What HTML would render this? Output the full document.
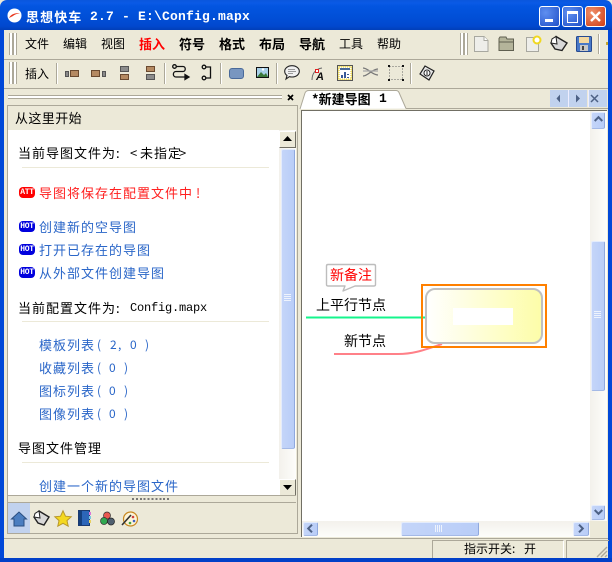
<!DOCTYPE html>
<html><head><meta charset="utf-8"><style>
html,body{margin:0;padding:0;background:#ece9d8}
#w{position:relative;width:612px;height:562px;overflow:hidden;background:#ece9d8;font-family:"WenQuanYi Zen Hei","Noto Sans CJK SC","Liberation Sans",sans-serif;font-size:12px;color:#000}
.a{position:absolute}
.t{position:absolute;white-space:nowrap;line-height:16px}
.m{font-family:"Liberation Mono","WenQuanYi Zen Hei",monospace}
.b{font-weight:bold}
.mb{font-weight:bold;font-size:13px}
.c{font-size:13px;letter-spacing:1px}
.l{color:#2a66c8}
.hr{position:absolute;left:22px;width:247px;height:1px;background:#ece9d8}
.grip{position:absolute;width:2px;border-left:1px solid #aca899;border-right:1px solid #aca899;background:#fff}
.sep{position:absolute;width:1px;background:#aca899;border-right:1px solid #fff}
.badge{position:absolute;left:19px;width:16px;height:11px;border-radius:4px;color:#fff;font:bold 8px/11px "Liberation Mono",monospace;text-align:center;background:#00d;letter-spacing:-.3px}
svg{position:absolute;overflow:visible}
.sb{position:absolute;background:linear-gradient(90deg,#c4d5f9,#b9cdf7);border:1px solid #e4ecfc;border-right-color:#8fa8de;border-bottom-color:#a4b9e6;border-radius:2px}
</style></head><body><div id="w">
<!-- title bar -->
<div class="a" style="left:0;top:0;width:612px;height:30px;background:linear-gradient(#0a56dc 0,#0a5ae6 3px,#0355e0 6px,#0150d8 16px,#0148cf 26px,#013fb8 30px);border-radius:7px 7px 0 0"></div>
<div class="a" style="left:0;top:30px;width:4px;height:532px;background:#0148d8"></div>
<div class="a" style="left:608px;top:30px;width:4px;height:532px;background:#0148d8"></div>
<div class="a" style="left:0;top:558px;width:612px;height:4px;background:#0140c8"></div>
<svg style="left:7px;top:8px" width="15" height="15"><circle cx="7.5" cy="7.500" r="7" fill="#fff"/><path d="M2 10 C4 6 8 5 13 5 C9 6 7 7 6 8 Z" fill="#e8361c"/></svg>
<div class="t b" style="left:26px;top:9px;color:#fff;font-size:13px;letter-spacing:1.100px">思想快车</div>
<div class="t b m" style="left:90px;top:9px;color:#fff;font-size:13px;letter-spacing:.2px">2.7 - E:\Config.mapx</div>
<!-- window buttons -->
<div class="a" style="left:539px;top:6px;width:19px;height:19px;border:1px solid #fff;border-radius:3px;background:radial-gradient(circle at 30% 30%,#5f8ff0,#2050c8)"></div>
<div class="a" style="left:545px;top:19px;width:8px;height:3px;background:#fff"></div>
<div class="a" style="left:562px;top:6px;width:19px;height:19px;border:1px solid #fff;border-radius:3px;background:radial-gradient(circle at 30% 30%,#5f8ff0,#2050c8)"></div>
<div class="a" style="left:567px;top:11px;width:9px;height:8px;border:1px solid #fff;border-top:3px solid #fff"></div>
<div class="a" style="left:585px;top:6px;width:19px;height:19px;border:1px solid #fff;border-radius:3px;background:radial-gradient(circle at 30% 30%,#f0906a,#d03c14)"></div>
<svg style="left:590px;top:11px" width="11" height="11"><path d="M1 1L10 10M10 1L1 10" stroke="#fff" stroke-width="2.400"/></svg>
<!-- toolbars -->
<div class="a" style="left:4px;top:59px;width:604px;height:1px;background:#aca899"></div>
<div class="a" style="left:4px;top:88px;width:604px;height:1px;background:#aca899"></div>
<div class="grip" style="left:9px;top:33px;height:22px"></div>
<div class="grip" style="left:13px;top:33px;height:22px"></div>
<div class="grip" style="left:9px;top:62px;height:22px"></div>
<div class="grip" style="left:13px;top:62px;height:22px"></div>
<div class="t" style="left:25px;top:36px">文件</div>
<div class="t" style="left:63px;top:36px">编辑</div>
<div class="t" style="left:101px;top:36px">视图</div>
<div class="t mb" style="left:139px;top:36px;color:#f00">插入</div>
<div class="t mb" style="left:179px;top:36px">符号</div>
<div class="t mb" style="left:219px;top:36px">格式</div>
<div class="t mb" style="left:259px;top:36px">布局</div>
<div class="t mb" style="left:299px;top:36px">导航</div>
<div class="t" style="left:339px;top:36px">工具</div>
<div class="t" style="left:377px;top:36px">帮助</div>
<div class="grip" style="left:460px;top:33px;height:22px"></div>
<div class="grip" style="left:464px;top:33px;height:22px"></div>
<!-- top-right icons -->
<svg style="left:473px;top:35px" width="18" height="18"><path d="M1.500 1.500H11L15 5.500V16.500H1.500Z" fill="#eeeeea" stroke="#a8a8a0"/><path d="M11 1.500V5.500H15" fill="#fff" stroke="#a8a8a0"/></svg>
<svg style="left:498px;top:36px" width="18" height="16"><path d="M1 14.500V2.500L2 1H8L9 3H15.500V14.500Z" fill="#b4b49a" stroke="#5f5f50"/><path d="M1 6H15.500" stroke="#5f5f50"/></svg>
<svg style="left:525px;top:35px" width="18" height="18"><rect x="1.500" y="2.500" width="12" height="14" fill="#eeeeea" stroke="#a8a8a0"/><circle cx="12" cy="5" r="3.500" fill="#fff" stroke="#f0d820" stroke-width="2"/></svg>
<svg style="left:549px;top:35px" width="20" height="18"><path d="M7 1.500L18 8L13 15.500L6 14L2 8Z" fill="#d8d8d8" stroke="#222" stroke-width="1.400"/><path d="M2 8L3 4L7 1.500L8 9Z" fill="#fff" stroke="#222"/></svg>
<svg style="left:576px;top:36px" width="16" height="16"><rect x=".5" y=".5" width="15" height="15" rx="1" fill="#4878c8" stroke="#264a90"/><rect x="3" y="1" width="10" height="6" fill="#f4d8a0"/><rect x="4" y="9" width="8" height="6" fill="#c8c8c8"/><rect x="6" y="10" width="2" height="4" fill="#444"/></svg>
<div class="sep" style="left:598px;top:34px;height:20px"></div>
<div class="a" style="left:606px;top:42px;width:2px;height:3px;background:#c8a830"></div>
<!-- toolbar 2 -->
<div class="t" style="left:25px;top:66px">插入</div>
<div class="sep" style="left:56px;top:63px;height:21px"></div>
<svg style="left:65px;top:70px" width="42" height="8">
<rect x=".5" y="1.500" width="3" height="5" fill="#8a8a8a" stroke="#555"/><rect x="5.500" y=".5" width="8" height="6" fill="#b58a62" stroke="#6a4a30"/>
<rect x="26.500" y=".5" width="8" height="6" fill="#b58a62" stroke="#6a4a30"/><rect x="37.500" y="1.500" width="3" height="5" fill="#8a8a8a" stroke="#555"/>
</svg>
<svg style="left:120px;top:66px" width="36" height="15">
<rect x=".5" y=".5" width="8" height="5" fill="#8c8c8c" stroke="#555"/><rect x=".5" y="8.500" width="8" height="5" fill="#b58a62" stroke="#6a4a30"/>
<rect x="26.500" y=".5" width="8" height="5" fill="#b58a62" stroke="#6a4a30"/><rect x="26.500" y="8.500" width="8" height="5" fill="#8c8c8c" stroke="#555"/>
</svg>
<div class="sep" style="left:164px;top:63px;height:21px"></div>
<svg style="left:171px;top:64px" width="20" height="18" fill="none" stroke="#111" stroke-width="1.300"><circle cx="3.500" cy="2.500" r="1.800"/><path d="M5 2.500H12C15 2.500 15 7.500 12 7.500H5C1.500 7.500 1.500 13 5 13H14"/><path d="M14 10.500L18 13L14 15.500Z" fill="#111"/></svg>
<svg style="left:201px;top:64px" width="12" height="18" fill="none" stroke="#111" stroke-width="1.300"><circle cx="3" cy="3" r="1.800"/><circle cx="3" cy="14" r="1.800"/><path d="M5 3H9.500V14H5"/></svg>
<div class="sep" style="left:220px;top:63px;height:21px"></div>
<div class="a" style="left:229px;top:68px;width:13px;height:9px;background:#7896c0;border:1px solid #4a6a9a;border-radius:3px"></div>
<svg style="left:256px;top:67px" width="14" height="12"><rect x=".5" y=".5" width="12" height="10" fill="#a8d0e8" stroke="#111"/><path d="M1 10L5 5L8 8L10 6L12 10Z" fill="#3c7a3c"/><circle cx="7" cy="2.500" r="1.200" fill="#fff"/></svg>
<div class="sep" style="left:276px;top:63px;height:21px"></div>
<svg style="left:284px;top:65px" width="16" height="15"><path d="M8 .7C12 .7 15.300 3 15.300 6.300S12 12 8 12C7 12 6 11.800 5.500 11.600L2 14L3 10.500C1.500 9.500 .7 8 .7 6.300C.7 3 4 .7 8 .7Z" fill="#f0f0f0" stroke="#222" stroke-width="1.100"/><path d="M4 4.500H11M4 6.500H12M4 8.500H9" stroke="#999"/></svg>
<svg style="left:311px;top:66px" width="16" height="15"><path d="M1 14C1 8 4 3 11 2" fill="none" stroke="#666"/><rect x="4.500" y="3.500" width="3" height="3" fill="#fff" stroke="#e02020"/><text x="5" y="14" font-family="Liberation Sans" font-style="italic" font-weight="bold" font-size="11" fill="#111">A</text></svg>
<svg style="left:337px;top:65px" width="16" height="16"><rect x=".5" y=".5" width="15" height="15" fill="#f4eca0" stroke="#555"/><rect x="2" y="2" width="12" height="12" fill="#fff" stroke="#e8c820" stroke-dasharray="1 1"/><rect x="3" y="3" width="10" height="2" fill="#4a6a98"/><path d="M4 13V10H6V13ZM7 13V7H9V13ZM10 9H12V10H10ZM10 12H12V13H10Z" fill="#3a5a98"/></svg>
<svg style="left:362px;top:66px" width="17" height="13" fill="none" stroke="#777" stroke-width="1.300"><path d="M1 2C6 2 10 9 16 9M1 10C6 10 10 3 16 3"/><path d="M1 5H16" stroke="#aaa"/></svg>
<svg style="left:388px;top:65px" width="16" height="16"><rect x="1.500" y="1.500" width="13" height="13" fill="none" stroke="#666" stroke-dasharray="1 2"/><path d="M0 0h2v2H0zM14 0h2v2h-2zM0 14h2v2H0zM14 14h2v2h-2z" fill="#111"/></svg>
<div class="sep" style="left:410px;top:63px;height:21px"></div>
<svg style="left:419px;top:65px" width="16" height="16"><path d="M6 1L15 6L10 15L1 9Z" fill="#e8e8e8" stroke="#222" stroke-width="1.200"/><circle cx="8" cy="8" r="3" fill="#fff" stroke="#222"/><path d="M8 6V10" stroke="#222"/></svg>
<!-- left dock header -->
<div class="a" style="left:8px;top:95px;width:274px;height:2px;border-top:1px solid #aca899;border-bottom:1px solid #aca899;background:#fff"></div>
<svg style="left:287px;top:94px" width="7" height="7"><path d="M1 1L6 6M6 1L1 6" stroke="#000" stroke-width="1.700"/></svg>
<!-- left panel -->
<div class="a" style="left:7px;top:105px;width:289px;height:427px;border:1px solid #aca899;background:#ece9d8"></div>
<div class="t" style="left:15px;top:110px;font-size:13px;letter-spacing:.4px">从这里开始</div>
<div class="a" style="left:8px;top:130px;width:271px;height:365px;background:#fff"></div>
<div class="t c" style="left:18px;top:145px">当前导图文件为</div>
<div class="t c" style="left:116px;top:145px">:</div>
<div class="t c" style="left:130px;top:145px">&lt;</div>
<div class="t c" style="left:140px;top:145px">未指定</div>
<div class="t c" style="left:179px;top:145px">&gt;</div>
<div class="hr" style="top:167px"></div>
<div class="badge" style="top:187px;background:#f00">ATT</div>
<div class="t c" style="left:39px;top:185px;color:#ff2020">导图将保存在配置文件中</div>
<div class="t c" style="left:196px;top:185px;color:#ff2020">!</div>
<div class="badge" style="top:221px">HOT</div>
<div class="t c l" style="left:39px;top:219px">创建新的空导图</div>
<div class="badge" style="top:244px">HOT</div>
<div class="t c l" style="left:39px;top:242px">打开已存在的导图</div>
<div class="badge" style="top:267px">HOT</div>
<div class="t c l" style="left:39px;top:265px">从外部文件创建导图</div>
<div class="t c" style="left:18px;top:300px">当前配置文件为</div>
<div class="t c" style="left:116px;top:300px">:</div>
<div class="t m" style="left:130px;top:300px;letter-spacing:-.2px">Config.mapx</div>
<div class="hr" style="top:321px"></div>
<div class="t c l" style="left:39px;top:337px">模板列表</div>
<div class="t l" style="left:97px;top:337px">(</div>
<div class="t l" style="left:110px;top:337px">2</div>
<div class="t l" style="left:118px;top:337px">,</div>
<div class="t l" style="left:130px;top:337px">0</div>
<div class="t l" style="left:145px;top:337px">)</div>
<div class="t c l" style="left:39px;top:360px">收藏列表</div>
<div class="t l" style="left:97px;top:360px">(</div>
<div class="t l" style="left:109px;top:360px">0</div>
<div class="t l" style="left:124px;top:360px">)</div>
<div class="t c l" style="left:39px;top:383px">图标列表</div>
<div class="t l" style="left:97px;top:383px">(</div>
<div class="t l" style="left:109px;top:383px">0</div>
<div class="t l" style="left:124px;top:383px">)</div>
<div class="t c l" style="left:39px;top:406px">图像列表</div>
<div class="t l" style="left:97px;top:406px">(</div>
<div class="t l" style="left:109px;top:406px">0</div>
<div class="t l" style="left:124px;top:406px">)</div>
<div class="t c" style="left:18px;top:440px">导图文件管理</div>
<div class="hr" style="top:462px"></div>
<div class="t c l" style="left:39px;top:478px">创建一个新的导图文件</div>
<!-- left scrollbar -->
<div class="a" style="left:279px;top:130px;width:17px;height:365px;background:linear-gradient(90deg,#f3f1ec,#fdfdfa)"></div>
<div class="a" style="left:279px;top:131px;width:15px;height:15px;background:#ece9d8;border:1px solid;border-color:#fff #716f64 #716f64 #fff"></div>
<svg style="left:283px;top:136px" width="9" height="5"><path d="M0 5H9L4.500 0Z" fill="#000"/></svg>
<div class="sb" style="left:281px;top:149px;width:12px;height:298px"></div>
<div class="a" style="left:284px;top:294px;width:7px;height:7px;background:repeating-linear-gradient(#eef3fd 0 1px,transparent 1px 2px)"></div>
<div class="a" style="left:279px;top:479px;width:15px;height:15px;background:#ece9d8;border:1px solid;border-color:#fff #716f64 #716f64 #fff"></div>
<svg style="left:283px;top:485px" width="9" height="5"><path d="M0 0H9L4.500 5Z" fill="#000"/></svg>
<!-- splitter -->
<div class="a" style="left:8px;top:495px;width:288px;height:1px;background:#aca899"></div>
<div class="a" style="left:132px;top:498px;width:39px;height:2px;background:repeating-linear-gradient(90deg,#777 0 2px,transparent 2px 3.900px)"></div>
<div class="a" style="left:8px;top:502px;width:288px;height:1px;background:#aca899"></div>
<!-- bottom icons -->
<div class="a" style="left:8px;top:503px;width:22px;height:30px;background:#c1d2ee"></div>
<svg style="left:11px;top:511px" width="16" height="16"><path d="M.5 8L8 1L15.500 8H13V15H3V8Z" fill="#4b7ec0" stroke="#2a4e80"/></svg>
<svg style="left:33px;top:510px" width="17" height="16"><path d="M6 1L16 7L11 15L5 13L1 7Z" fill="#d8d8d8" stroke="#222" stroke-width="1.400"/><path d="M1 7L2 3.500L6 1L7 8Z" fill="#fff" stroke="#222"/></svg>
<svg style="left:54px;top:510px" width="18" height="17"><path d="M9 .8L11.500 6.200L17.200 6.800L13 10.600L14.200 16.200L9 13.300L3.800 16.200L5 10.600L.8 6.800L6.500 6.200Z" fill="#f4d820" stroke="#b8982a"/></svg>
<svg style="left:78px;top:510px" width="14" height="17"><rect x=".5" y=".5" width="11" height="15" fill="#2c66b8" stroke="#1a3a70"/><rect x="1" y="1" width="3" height="14" fill="#14407e"/><rect x="11" y="2" width="2" height="3" fill="#d878d8"/><rect x="11" y="6" width="2" height="3" fill="#78c8e0"/><rect x="11" y="10" width="2" height="3" fill="#e8d060"/></svg>
<svg style="left:100px;top:511px" width="15" height="15"><circle cx="7" cy="4.500" r="3.500" fill="#e85850" stroke="#333" stroke-width=".7"/><circle cx="4" cy="10" r="3.500" fill="#30a850" stroke="#333" stroke-width=".7"/><circle cx="11" cy="10.500" r="3.500" fill="#506070" stroke="#222" stroke-width=".7"/></svg>
<svg style="left:121px;top:510px" width="17" height="17"><ellipse cx="9.500" cy="9" rx="7" ry="7" fill="#fcf4d8" stroke="#c88820" stroke-width="1.200"/><circle cx="12" cy="7" r="1.300" fill="#d04040"/><circle cx="13" cy="11" r="1.300" fill="#4060c0"/><circle cx="9" cy="13" r="1.300" fill="#40a040"/><path d="M1 15L10 5" stroke="#333" stroke-width="1.600"/></svg>
<!-- tab -->
<svg style="left:300px;top:89px" width="108" height="21"><path d="M0 20L5 4Q6 1.500 9 1.500H96Q98 1.500 99 3.500L106 19.500" fill="#fff" stroke="#aca899"/></svg>
<div class="t b" style="left:312px;top:91px;font-size:13px">*新建导图</div>
<div class="t b m" style="left:379px;top:91px;font-size:13px">1</div>
<div class="a" style="left:406px;top:108px;width:202px;height:1px;background:#aca899"></div>
<div class="a" style="left:550px;top:90px;width:18px;height:17px;background:#c1d2ee;border-right:1px solid #eef"></div>
<div class="a" style="left:569px;top:90px;width:18px;height:17px;background:#c1d2ee"></div>
<div class="a" style="left:588px;top:90px;width:18px;height:17px;background:#c1d2ee;border-left:1px solid #eef"></div>
<svg style="left:555px;top:93px" width="50" height="11"><path d="M5 1.500L1.500 5.500L5 9.500Z" fill="#4d6185"/><path d="M21 1.500L25 5.500L21 9.500Z" fill="#4d6185"/><path d="M36 2L43 9M43 2L36 9" stroke="#4d6185" stroke-width="1.500"/></svg>
<!-- canvas -->
<div class="a" style="left:301px;top:110px;width:1px;height:427px;background:#716f64"></div>
<div class="a" style="left:301px;top:110px;width:306px;height:1px;background:#716f64"></div>
<div class="a" style="left:302px;top:111px;width:288px;height:410px;background:#fff"></div>
<!-- right scrollbar -->
<div class="a" style="left:590px;top:111px;width:17px;height:410px;background:linear-gradient(90deg,#f3f1ec,#fdfdfa)"></div>
<div class="sb" style="left:591px;top:112px;width:12px;height:15px"></div>
<svg style="left:594px;top:116px" width="9" height="6"><path d="M.7 5L4.500 1.200L8.300 5" fill="none" stroke="#4d6185" stroke-width="2"/></svg>
<div class="sb" style="left:591px;top:241px;width:12px;height:148px"></div>
<div class="a" style="left:594px;top:311px;width:7px;height:7px;background:repeating-linear-gradient(#eef3fd 0 1px,transparent 1px 2px)"></div>
<div class="sb" style="left:591px;top:505px;width:12px;height:13px"></div>
<svg style="left:594px;top:509px" width="9" height="6"><path d="M.7 1L4.500 4.800L8.300 1" fill="none" stroke="#4d6185" stroke-width="2"/></svg>
<!-- bottom scrollbar -->
<div class="a" style="left:302px;top:521px;width:288px;height:16px;background:linear-gradient(#f3f1ec,#fdfdfa)"></div>
<div class="sb" style="left:303px;top:522px;width:13px;height:12px"></div>
<svg style="left:307px;top:524px" width="6" height="9"><path d="M5 .7L1.200 4.500L5 8.300" fill="none" stroke="#4d6185" stroke-width="2"/></svg>
<div class="sb" style="left:401px;top:522px;width:76px;height:12px"></div>
<div class="a" style="left:435px;top:525px;width:7px;height:7px;background:repeating-linear-gradient(90deg,#eef3fd 0 1px,transparent 1px 2px)"></div>
<div class="sb" style="left:573px;top:522px;width:14px;height:12px"></div>
<svg style="left:578px;top:524px" width="6" height="9"><path d="M1 .7L4.800 4.500L1 8.300" fill="none" stroke="#4d6185" stroke-width="2"/></svg>
<!-- mindmap -->
<svg style="left:302px;top:255px" width="260" height="115">
<path d="M4 62.500H124" stroke="#14f58c" stroke-width="2"/>
<path d="M32 99H96C112 99 122 95 140 89" fill="none" stroke="#ff8088" stroke-width="2"/>
<path d="M26 9.500Q24.500 9.500 24.500 11V29.500Q24.500 31 26 31H43L41 36L53 31H72Q73.500 31 73.500 29.500V11Q73.500 9.500 72 9.500Z" fill="#fff" stroke="#bdbdbd" stroke-width="1.400" stroke-linejoin="round"/>
<rect x="120" y="30" width="124" height="62" fill="none" stroke="#ff8000" stroke-width="2"/>
<defs><linearGradient id="g"><stop offset="0" stop-color="#fff"/><stop offset="1" stop-color="#fdfda8"/></linearGradient></defs>
<rect x="124" y="34" width="116" height="54" rx="9" fill="url(#g)" stroke="#c0c0c0" stroke-width="2"/>
<rect x="151" y="53" width="60" height="17" fill="#fff"/>
</svg>
<div class="t" style="left:330px;top:267px;font-size:14px;color:#f00">新备注</div>
<div class="t" style="left:316px;top:297px;font-size:14px">上平行节点</div>
<div class="t" style="left:344px;top:333px;font-size:14px">新节点</div>
<!-- status bar -->
<div class="a" style="left:4px;top:538px;width:604px;height:1px;background:#aca899"></div>
<div class="a" style="left:432px;top:540px;width:130px;height:17px;border:1px solid #aca899;border-bottom:0;border-right:1px solid #fff"></div>
<div class="a" style="left:566px;top:540px;width:42px;height:17px;border:1px solid #aca899;border-bottom:0;border-right:0"></div>
<div class="t" style="left:464px;top:541px">指示开关:</div>
<div class="t" style="left:524px;top:541px">开</div>
<svg style="left:596px;top:546px" width="12" height="12"><path d="M11 1L1 11M11 5L5 11M11 9L9 11" stroke="#aca899" stroke-width="1.400"/></svg>
</div></body></html>
